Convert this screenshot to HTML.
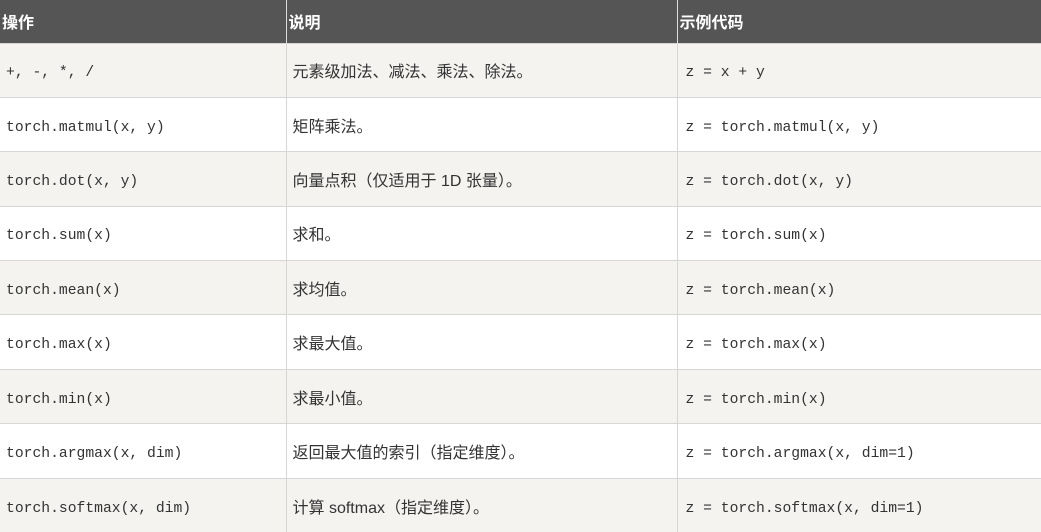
<!DOCTYPE html>
<html><head><meta charset="utf-8"><style>
html,body{margin:0;padding:0;background:#fff;width:1041px;height:532px;overflow:hidden}
table{border-collapse:collapse;width:1041px;table-layout:fixed;font-family:"Liberation Sans","Noto Sans CJK SC",sans-serif;font-size:16px;color:#333}
th{background:#555;color:#fff;font-weight:bold;text-align:left;height:43px;padding:0 0 0 2px;border-right:1px solid #ddd;box-sizing:border-box;font-size:16px}
td{height:54.4px;box-sizing:border-box;border-top:1px solid #d6d6d6;border-right:1px solid #d6d6d6;padding:0 0 0 6px;vertical-align:middle}
td:nth-child(3){padding-left:8px}
tr:nth-child(even) td{background:#f4f3f0}
tr:nth-child(odd) td{background:#fff}
.m span{font-family:"Liberation Mono","Noto Sans CJK SC",monospace;font-size:14.7px;color:#333;position:relative;top:2px}
</style></head><body>
<table>
<colgroup><col style="width:286px"><col style="width:391px"><col style="width:364px"></colgroup>
<tr><th>操作</th><th>说明</th><th>示例代码</th></tr>
<tr><td class="m"><span>+, -, *, /</span></td><td>元素级加法、减法、乘法、除法。</td><td class="m"><span>z = x + y</span></td></tr>
<tr><td class="m"><span>torch.matmul(x, y)</span></td><td>矩阵乘法。</td><td class="m"><span>z = torch.matmul(x, y)</span></td></tr>
<tr><td class="m"><span>torch.dot(x, y)</span></td><td>向量点积（仅适用于 1D 张量）。</td><td class="m"><span>z = torch.dot(x, y)</span></td></tr>
<tr><td class="m"><span>torch.sum(x)</span></td><td>求和。</td><td class="m"><span>z = torch.sum(x)</span></td></tr>
<tr><td class="m"><span>torch.mean(x)</span></td><td>求均值。</td><td class="m"><span>z = torch.mean(x)</span></td></tr>
<tr><td class="m"><span>torch.max(x)</span></td><td>求最大值。</td><td class="m"><span>z = torch.max(x)</span></td></tr>
<tr><td class="m"><span>torch.min(x)</span></td><td>求最小值。</td><td class="m"><span>z = torch.min(x)</span></td></tr>
<tr><td class="m"><span>torch.argmax(x, dim)</span></td><td>返回最大值的索引（指定维度）。</td><td class="m"><span>z = torch.argmax(x, dim=1)</span></td></tr>
<tr><td class="m"><span>torch.softmax(x, dim)</span></td><td>计算 softmax（指定维度）。</td><td class="m"><span>z = torch.softmax(x, dim=1)</span></td></tr>
</table>
</body></html>
